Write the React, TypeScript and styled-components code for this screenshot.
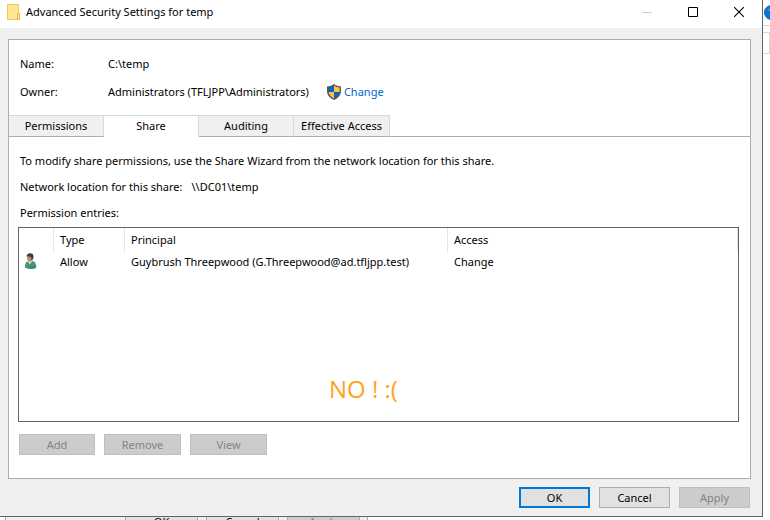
import React, { useState } from 'react';
import styled, { createGlobalStyle, css } from 'styled-components';

const GlobalStyle = createGlobalStyle`
  * { box-sizing: border-box; }
  body { margin: 0; background: #fff; }
  body, button, table {
    font-family: "Noto Sans", "Open Sans", sans-serif;
    font-size: 11px;
    line-height: 16px;
    color: #000;
  }
`;

const Desktop = styled.div`
  display: grid;
  grid-template-columns: 1fr 7px;
  grid-template-rows: 1fr 3px;
  min-height: 100vh;
  overflow: hidden;
`;

const Dialog = styled.main`
  display: flex;
  flex-direction: column;
  min-width: 0;
  background: #f0f0f0;
  border-right: 1px solid #646464;
  border-bottom: 1px solid #646464;
`;

const TitleBar = styled.header`
  display: flex;
  align-items: center;
  height: 28px;
  padding: 0 0 4px 7px;
  background: #fff;
`;

const Title = styled.h1`
  flex: 1;
  margin: 0 0 0 6px;
  font-size: 11px;
  font-weight: 400;
  line-height: 16px;
`;

const CaptionButton = styled.button`
  display: flex;
  align-items: center;
  justify-content: center;
  width: 46px;
  height: 24px;
  padding: 0;
  border: 0;
  background: transparent;
`;

const Panel = styled.section`
  flex: 1;
  display: flex;
  flex-direction: column;
  margin: 11px 11px 0 8px;
  background: #fff;
  border: 1px solid #adadad;
`;

const Details = styled.dl`
  display: grid;
  grid-template-columns: 88px 1fr;
  row-gap: 12px;
  margin: 0;
  padding: 16px 11px 15px;
`;

const Term = styled.dt`
  margin: 0;
`;

const Value = styled.dd`
  display: flex;
  align-items: center;
  gap: 18px;
  margin: 0;
`;

const ChangeLink = styled.a`
  display: flex;
  align-items: center;
  gap: 3px;
  color: #0066cc;
  text-decoration: none;
`;

const TabList = styled.div`
  display: grid;
  grid-template-columns: 95px 95px 95px 96px 1fr;
  height: 22px;
`;

const Tab = styled.button<{ $active: boolean }>`
  padding: 0;
  border: 1px solid #d9d9d9;
  border-left-width: 0;
  border-bottom-color: #adadad;
  background: #f0f0f0;
  white-space: nowrap;
  ${({ $active }) => $active && css`
    background: #fff;
    border-bottom-color: #fff;
  `}
`;

const TabRule = styled.div`
  border-bottom: 1px solid #adadad;
`;

const TabPanel = styled.div`
  flex: 1;
  display: flex;
  flex-direction: column;
  padding: 16px 11px 23px 9px;
`;

const Line = styled.p`
  display: flex;
  gap: 9px;
  margin: 0 0 10px 2px;
`;

const ListBox = styled.div`
  position: relative;
  flex: 1;
  min-height: 120px;
  margin-top: -4px;
  border: 1px solid #646464;
`;

const Entries = styled.table`
  width: 100%;
  table-layout: fixed;
  border-collapse: separate;
  border-spacing: 0;
`;

const Heading = styled.th`
  height: 24px;
  padding: 0 6px;
  border-right: 1px solid #e5e5e5;
  font-weight: 400;
  text-align: left;
`;

const Cell = styled.td`
  height: 20px;
  padding: 0 6px;
  white-space: nowrap;
`;

const IconCell = styled(Cell)`
  padding: 0 4px;
  line-height: 0;
`;

const Annotation = styled.p`
  position: absolute;
  left: 310px;
  bottom: 16px;
  margin: 0;
  font-family: "Open Sans", "Noto Sans", sans-serif;
  font-size: 24px;
  line-height: 32px;
  color: #ffa318;
`;

const Actions = styled.div`
  display: flex;
  gap: 9px;
  margin: 12px 0 0 1px;
`;

const Footer = styled.footer`
  display: flex;
  justify-content: flex-end;
  gap: 9px;
  padding: 8px 12px 8px 0;
`;

const PushButton = styled.button<{ $width: number; $primary?: boolean }>`
  width: ${({ $width }) => $width}px;
  height: 21px;
  padding: 0;
  border: ${({ $primary }) => ($primary ? '2px solid #0078d7' : '1px solid #adadad')};
  background: #e1e1e1;
  line-height: 16px;
  &:disabled {
    color: #838383;
    border-color: #bfbfbf;
    background: #ccc;
  }
`;

const SideWindow = styled.aside`
  overflow: hidden;
  padding-top: 5px;
  background: #fff;
`;

const SideHeader = styled.div`
  height: 21px;
  padding-left: 1px;
  border-bottom: 1px solid #d9d9d9;
`;

const SideField = styled.div`
  height: 22px;
  margin-top: 6px;
  border: 1px solid #d9d9d9;
  border-left: 0;
`;

const BackWindow = styled.div`
  grid-column: 1 / -1;
  display: flex;
  overflow: hidden;
  background: #fff;
`;

const BackFooter = styled.div`
  display: flex;
  justify-content: flex-end;
  gap: 8px;
  width: 363px;
  margin-left: 5px;
  padding-right: 7px;
  background: #f0f0f0;
  border-left: 1px solid #adadad;
  border-right: 1px solid #adadad;
`;

const BackButton = styled.button`
  width: 73px;
  height: 11px;
  padding: 0;
  border: 1px solid #adadad;
  border-top: 0;
  background: #e1e1e1;
  line-height: 10px;
  &:disabled {
    color: #838383;
    background: #ccc;
  }
`;

const FolderIcon = () => (
  <svg width="13" height="16" viewBox="0 0 13 16" aria-hidden="true">
    <path d="M.5.5h11v15H.5z" fill="#ffe694" stroke="#edc84b" />
    <path d="M10.5 9.5h2v6h-2z" fill="#ffe694" stroke="#e6bd3c" />
  </svg>
);

const ShieldIcon = () => (
  <svg width="14" height="16" viewBox="0 0 14 16" aria-hidden="true">
    <path d="M7 0C5 1.600 2.600 2.400 0 2.500V7c0 4.300 3 7.400 7 9 4-1.600 7-4.700 7-9V2.500C11.400 2.400 9 1.600 7 0z" fill="#55565a" />
    <path d="M7 1.600C5.300 2.800 3.500 3.500 1.400 3.700V8H7z" fill="#0a63c9" />
    <path d="M7 1.600c1.700 1.200 3.500 1.900 5.600 2.100V8H7z" fill="#ffc13a" />
    <path d="M1.500 8H7v6.500C4 13.100 1.900 11 1.500 8z" fill="#ffc13a" />
    <path d="M7 8h5.500c-.4 3-2.500 5.100-5.500 6.500z" fill="#0a63c9" />
  </svg>
);

const UserIcon = () => (
  <svg width="16" height="18" viewBox="0 0 16 18" aria-hidden="true">
    <path d="M2 14.500C1.700 11.500 2.500 9 5 8.300L9.500 8c2.800.7 4 3 3.800 6.500C12.500 16.500 5 16.800 2 14.500z" fill="#459878" />
    <path d="M5 8l1.500 3.500L9 8.500 8 7z" fill="#e4ebe5" />
    <path d="M4 3h5v4L7.500 9 5 8 4 6z" fill="#bd8c73" />
    <path d="M3.600 3.500C3.800 1.200 5.200.3 7.200.3c2.500 0 3.600 1.700 3.300 4.200L9.300 7.600 8.300 7V4L4.500 3.300z" fill="#49382d" />
    <path d="M5 13.500c2 1 4.500.8 7-.8" fill="none" stroke="#2d795b" />
  </svg>
);

const HelpBadge = () => (
  <svg width="6" height="15" viewBox="0 0 6 15" aria-hidden="true">
    <circle cx="7.500" cy="7.500" r="7" fill="#0878d8" stroke="#075fae" />
    <path d="M4.800 5.500c.2-1.300 1-2 2-2" stroke="#8cc4f2" fill="none" />
  </svg>
);

const MinimizeIcon = () => (
  <svg width="10" height="10" aria-hidden="true"><path d="M0 5.500h10" stroke="#ccc" /></svg>
);
const MaximizeIcon = () => (
  <svg width="10" height="10" aria-hidden="true"><path d="M.5.5h9v9h-9z" fill="none" stroke="#000" /></svg>
);
const CloseIcon = () => (
  <svg width="10" height="10" aria-hidden="true"><path d="M0 0l10 10M10 0L0 10" stroke="#000" strokeWidth="1.100" /></svg>
);

const tabs = ['Permissions', 'Share', 'Auditing', 'Effective Access'];

export default function App() {
  const [active, setActive] = useState('Share');
  return (
    <>
      <GlobalStyle />
      <Desktop>
        <Dialog>
          <TitleBar>
            <FolderIcon />
            <Title>Advanced Security Settings for temp</Title>
            <CaptionButton aria-label="Minimize" disabled><MinimizeIcon /></CaptionButton>
            <CaptionButton aria-label="Maximize"><MaximizeIcon /></CaptionButton>
            <CaptionButton aria-label="Close"><CloseIcon /></CaptionButton>
          </TitleBar>
          <Panel>
            <Details>
              <Term>Name:</Term>
              <Value>C:\temp</Value>
              <Term>Owner:</Term>
              <Value>
                Administrators (TFLJPP\Administrators)
                <ChangeLink href="#owner"><ShieldIcon />Change</ChangeLink>
              </Value>
            </Details>
            <TabList role="tablist">
              {tabs.map((name) => (
                <Tab
                  key={name}
                  role="tab"
                  aria-selected={name === active}
                  $active={name === active}
                  onClick={() => setActive(name)}
                >
                  {name}
                </Tab>
              ))}
              <TabRule />
            </TabList>
            <TabPanel role="tabpanel" aria-label={active}>
              <Line>To modify share permissions, use the Share Wizard from the network location for this share.</Line>
              <Line><span>Network location for this share:</span><span>\\DC01\temp</span></Line>
              <Line id="entries-label">Permission entries:</Line>
              <ListBox>
                <Entries aria-labelledby="entries-label">
                  <colgroup>
                    <col width="35" />
                    <col width="71" />
                    <col width="323" />
                    <col />
                  </colgroup>
                  <thead>
                    <tr>
                      <Heading />
                      <Heading>Type</Heading>
                      <Heading>Principal</Heading>
                      <Heading>Access</Heading>
                    </tr>
                  </thead>
                  <tbody>
                    <tr>
                      <IconCell><UserIcon /></IconCell>
                      <Cell>Allow</Cell>
                      <Cell>Guybrush Threepwood (G.Threepwood@ad.tfljpp.test)</Cell>
                      <Cell>Change</Cell>
                    </tr>
                  </tbody>
                </Entries>
                <Annotation>NO ! :(</Annotation>
              </ListBox>
              <Actions>
                <PushButton $width={76} disabled>Add</PushButton>
                <PushButton $width={77} disabled>Remove</PushButton>
                <PushButton $width={77} disabled>View</PushButton>
              </Actions>
            </TabPanel>
          </Panel>
          <Footer>
            <PushButton $width={71} $primary>OK</PushButton>
            <PushButton $width={71}>Cancel</PushButton>
            <PushButton $width={71} disabled>Apply</PushButton>
          </Footer>
        </Dialog>
        <SideWindow>
          <SideHeader><HelpBadge /></SideHeader>
          <SideField />
        </SideWindow>
        <BackWindow>
          <BackFooter>
            <BackButton>OK</BackButton>
            <BackButton>Cancel</BackButton>
            <BackButton disabled>Apply</BackButton>
          </BackFooter>
        </BackWindow>
      </Desktop>
    </>
  );
}
